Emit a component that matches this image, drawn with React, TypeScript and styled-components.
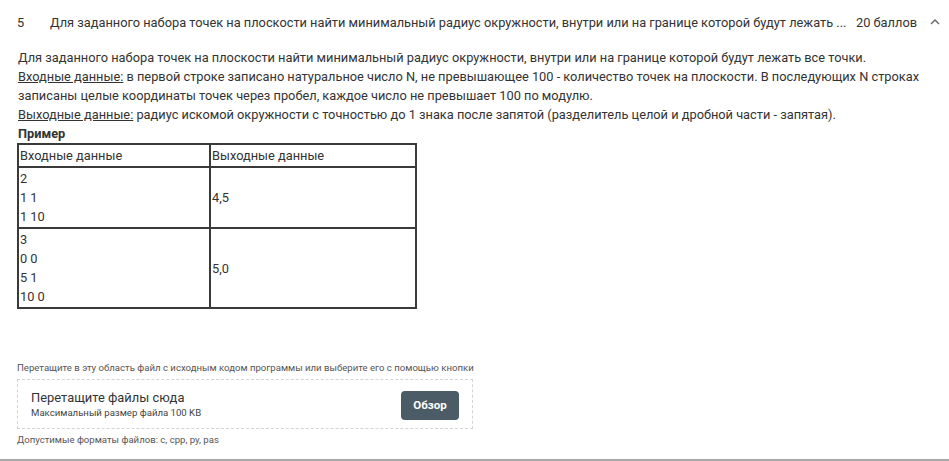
import React from "react";
import styled, { createGlobalStyle } from "styled-components";

const Global = createGlobalStyle`
  html, body { margin: 0; padding: 0; background: #fff; }
  body { font-family: Roboto, "Noto Sans", Arial, sans-serif; color: #333; }
`;

const Page = styled.div`
  width: 949px;
  height: 461px;
  box-sizing: border-box;
  border-bottom: 2px solid #a8a8a8;
  display: flex;
  flex-direction: column;
  overflow: hidden;
`;

const Header = styled.div`
  display: flex;
  align-items: center;
  height: 44px;
  padding: 0 0 0 17px;
  font-size: 12.8px;
  color: #333;
`;

const Num = styled.span`
  width: 33px;
  flex: none;
`;

const Title = styled.span`
  white-space: nowrap;
`;

const Points = styled.span`
  margin-left: auto;
  margin-right: 4px;
  white-space: nowrap;
`;

const Chevron = styled.span`
  width: 28px;
  display: flex;
  justify-content: center;
  color: #666;
`;

const Body = styled.div`
  padding: 4px 18px 0 18px;
  font-size: 12.8px;
  line-height: 19px;
  color: #333;
`;

const U = styled.span`
  text-decoration: underline;
`;

const Bold = styled.div`
  font-weight: 700;
  line-height: 19px;
`;

const Table = styled.table`
  border-collapse: collapse;
  width: 400px;
  margin-left: -1px;
  font-size: 12.8px;
  line-height: 19px;
  color: #333;
`;

const Cell = styled.td<{ $w?: number }>`
  border: 2px solid #3a3a3a;
  padding: 1px 1px;
  vertical-align: middle;
  width: ${(p) => (p.$w ? `${p.$w}px` : "auto")};
`;

const Upload = styled.div`
  padding: 0 0 0 17px;
  margin-top: 52px;
`;

const Hint = styled.div`
  font-size: 9.6px;
  color: #555;
  line-height: 14px;
`;

const Drop = styled.div`
  width: 456px;
  box-sizing: border-box;
  height: 50px;
  margin: 4px 0 4px 0;
  border: 1px dashed #d4d4d4;
  display: flex;
  align-items: center;
  padding: 0 13px 0 13px;
`;

const DropText = styled.div`
  flex: 1;
  display: flex;
  flex-direction: column;
`;

const DropTitle = styled.div`
  font-size: 12.9px;
  color: #333;
  line-height: 17px;
`;

const DropSub = styled.div`
  font-size: 9.6px;
  color: #444;
  line-height: 14px;
`;

const Button = styled.button`
  width: 58px;
  height: 29px;
  border: none;
  border-radius: 4px;
  background: #4b5c67;
  color: #fff;
  font-family: Roboto, "Noto Sans", Arial, sans-serif;
  font-weight: 700;
  font-size: 11.5px;
  padding: 0;
  margin-top: 2px;
`;

export default function App() {
  return (
    <>
      <Global />
      <Page>
        <Header>
          <Num>5</Num>
          <Title>
            Для заданного набора точек на плоскости найти минимальный радиус окружности, внутри или на границе которой будут лежать ...
          </Title>
          <Points>20 баллов</Points>
          <Chevron>
            <svg width="10" height="6" viewBox="0 0 10 6">
              <path d="M1 5 L5 1 L9 5" fill="none" stroke="#666" strokeWidth="1.4" />
            </svg>
          </Chevron>
        </Header>
        <Body>
          <div>
            Для заданного набора точек на плоскости найти минимальный радиус окружности, внутри или на границе которой будут лежать все точки.
          </div>
          <div>
            <U>Входные данные:</U> в первой строке записано натуральное число N, не превышающее 100 - количество точек на плоскости. В последующих N строках записаны целые координаты точек через пробел, каждое число не превышает 100 по модулю.
          </div>
          <div>
            <U>Выходные данные:</U> радиус искомой окружности с точностью до 1 знака после запятой (разделитель целой и дробной части - запятая).
          </div>
          <Bold>Пример</Bold>
          <Table>
            <tbody>
              <tr>
                <Cell $w={188}>Входные данные</Cell>
                <Cell>Выходные данные</Cell>
              </tr>
              <tr>
                <Cell>
                  2<br />1 1<br />1 10
                </Cell>
                <Cell>4,5</Cell>
              </tr>
              <tr>
                <Cell>
                  3<br />0 0<br />5 1<br />10 0
                </Cell>
                <Cell>5,0</Cell>
              </tr>
            </tbody>
          </Table>
        </Body>
        <Upload>
          <Hint>Перетащите в эту область файл с исходным кодом программы или выберите его с помощью кнопки</Hint>
          <Drop>
            <DropText>
              <DropTitle>Перетащите файлы сюда</DropTitle>
              <DropSub>Максимальный размер файла 100 KB</DropSub>
            </DropText>
            <Button>Обзор</Button>
          </Drop>
          <Hint>Допустимые форматы файлов: c, cpp, py, pas</Hint>
        </Upload>
      </Page>
    </>
  );
}
